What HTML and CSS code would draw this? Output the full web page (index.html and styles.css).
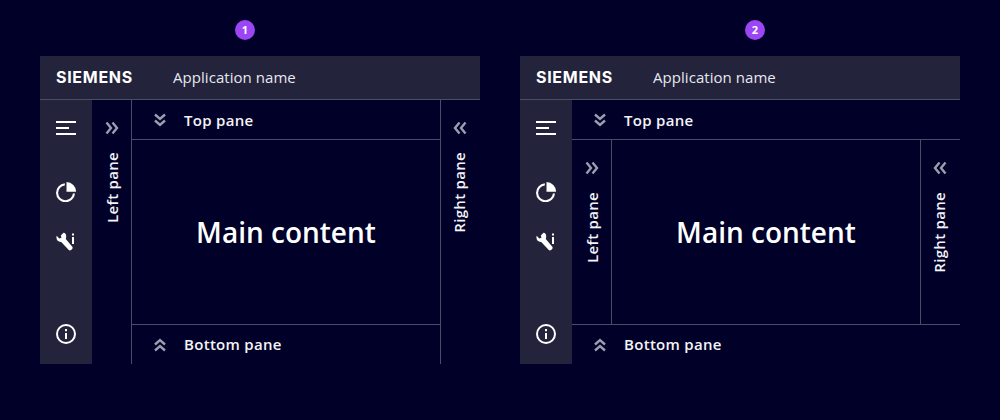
FILE: index.html
```html
<!DOCTYPE html>
<html lang="en">
<head>
    <meta charset="UTF-8">
    <title>Pane layouts</title>
    <link rel="stylesheet" href="styles.css">
</head>
<body>
    <svg class="icon-defs" width="0" height="0">
        <symbol id="chev-right" viewBox="0 0 16 16"><path d="M2.500 2.500 7 8l-4.500 5.500M8.500 2.500 13 8l-4.500 5.500"/></symbol>
        <symbol id="chev-left" viewBox="0 0 16 16"><path d="M7.500 2.500 3 8l4.500 5.500M13.500 2.500 9 8l4.500 5.500"/></symbol>
        <symbol id="chev-down" viewBox="0 0 16 16"><path d="M3 2.500 8 7l5-4.500M3 8.500 8 13l5-4.500"/></symbol>
        <symbol id="chev-up" viewBox="0 0 16 16"><path d="M3 7.500 8 3l5 4.500M3 13.500 8 9l5 4.500"/></symbol>
        <symbol id="ico-menu" viewBox="0 0 20 20"><path d="M0 3h20v2H0zM0 9h13v2H0zM0 15h20v2H0z"/></symbol>
        <symbol id="ico-pie" viewBox="0 0 20 20"><path d="M8.800 1.300A9.500 9.500 0 1 0 19 11.500h-2.100A7.400 7.400 0 1 1 8.800 3.400z"/><path d="M10.500 0A9.500 9.500 0 0 1 20 9.800h-9.500z"/></symbol>
        <symbol id="ico-tool" viewBox="0 0 20 20"><path d="M7.500.8 4.800 3.500l.7 2.200-2.200.7L.7 3.800C-.4 7.200 1.800 10.300 5.200 10l7.600 8c1.400 1.500 5-1.600 3.500-3.300L9.800 7C10.800 3.500 10 1 7.500.8z"/><path d="M16 1.500h2v2h-2zM16 5h2v7h-2z"/></symbol>
        <symbol id="ico-info" viewBox="0 0 20 20"><path d="M10 0a10 10 0 1 0 0 20 10 10 0 0 0 0-20zm0 2a8 8 0 1 1 0 16 8 8 0 0 1 0-16z" fill-rule="evenodd"/><path d="M9 5h2v2.200H9zM9 9h2v6H9z"/></symbol>
    </svg>

    <div class="columns">
        <!-- side panes run full height -->
        <div class="example">
            <div class="badge badge-first">1</div>
            <div class="frame">
                <div class="header">
                    <span class="logo">SIEMENS</span>
                    <span class="app-name">Application name</span>
                </div>
                <div class="body">
                    <div class="sidebar">
                        <svg class="side-icon"><use href="#ico-menu"/></svg>
                        <svg class="side-icon pie-icon"><use href="#ico-pie"/></svg>
                        <svg class="side-icon tool-icon"><use href="#ico-tool"/></svg>
                        <svg class="side-icon info-icon"><use href="#ico-info"/></svg>
                    </div>
                    <div class="panes panes-full-sides">
                        <div class="pane pane-top"><svg class="chev"><use href="#chev-down"/></svg><span>Top pane</span></div>
                        <div class="pane pane-left"><svg class="chev"><use href="#chev-right"/></svg><span>Left pane</span></div>
                        <div class="main">Main content</div>
                        <div class="pane pane-right"><svg class="chev"><use href="#chev-left"/></svg><span>Right pane</span></div>
                        <div class="pane pane-bottom"><svg class="chev"><use href="#chev-up"/></svg><span>Bottom pane</span></div>
                    </div>
                </div>
            </div>
        </div>

        <!-- top and bottom panes run full width -->
        <div class="example">
            <div class="badge badge-second">2</div>
            <div class="frame">
                <div class="header">
                    <span class="logo">SIEMENS</span>
                    <span class="app-name">Application name</span>
                </div>
                <div class="body">
                    <div class="sidebar">
                        <svg class="side-icon"><use href="#ico-menu"/></svg>
                        <svg class="side-icon pie-icon"><use href="#ico-pie"/></svg>
                        <svg class="side-icon tool-icon"><use href="#ico-tool"/></svg>
                        <svg class="side-icon info-icon"><use href="#ico-info"/></svg>
                    </div>
                    <div class="panes panes-full-bars">
                        <div class="pane pane-top"><svg class="chev"><use href="#chev-down"/></svg><span>Top pane</span></div>
                        <div class="pane pane-left"><svg class="chev"><use href="#chev-right"/></svg><span>Left pane</span></div>
                        <div class="main">Main content</div>
                        <div class="pane pane-right"><svg class="chev"><use href="#chev-left"/></svg><span>Right pane</span></div>
                        <div class="pane pane-bottom"><svg class="chev"><use href="#chev-up"/></svg><span>Bottom pane</span></div>
                    </div>
                </div>
            </div>
        </div>
    </div>
</body>
</html>
```

FILE: styles.css
```css
* {
    margin: 0;
    padding: 0;
    box-sizing: border-box;
}

body {
    width: 1000px;
    height: 420px;
    overflow: hidden;
    background: #000028;
    color: #fff;
    font-family: 'Open Sans', 'Noto Sans', sans-serif;
}

.icon-defs {
    position: absolute;
}

.columns {
    display: flex;
    gap: 40px;
    padding: 20px 40px 0;
}

.example {
    width: 440px;
    display: flex;
    flex-direction: column;
    align-items: center;
    gap: 16px;
}

.badge {
    width: 20px;
    height: 20px;
    border-radius: 50%;
    background: #9b45f5;
    font-size: 11px;
    font-weight: 700;
    line-height: 20px;
    text-align: center;
}

.badge-first {
    margin-right: 30px;
}

.badge-second {
    margin-left: 30px;
}

.frame {
    width: 100%;
    height: 308px;
    display: flex;
    flex-direction: column;
}

/* header */
.header {
    height: 44px;
    flex: none;
    display: flex;
    align-items: center;
    gap: 40px;
    padding: 0 16px 1px;
    background: #23233c;
    border-bottom: 1px solid #4c4c68;
}

.logo {
    width: 77px;
    font-family: 'Inter', sans-serif;
    font-size: 16px;
    font-weight: 700;
    letter-spacing: 0.7px;
    white-space: nowrap;
}

.app-name {
    font-size: 15px;
    letter-spacing: 0.05px;
    color: #e8e8ee;
}

.body {
    flex: 1;
    display: flex;
    min-height: 0;
}

/* sidebar */
.sidebar {
    width: 52px;
    flex: none;
    display: flex;
    flex-direction: column;
    align-items: center;
    padding-top: 18px;
    background: #23233c;
}

.side-icon {
    width: 20px;
    height: 20px;
    fill: #fff;
    flex: none;
}

.pie-icon {
    margin-top: 44px;
}

.tool-icon {
    margin-top: 30px;
}

.info-icon {
    margin-top: auto;
    margin-bottom: 20px;
}

/* panes */
.panes {
    flex: 1;
    display: grid;
    grid-template-columns: 40px 1fr 40px;
    grid-template-rows: 40px 1fr 40px;
}

.panes-full-sides {
    grid-template-areas:
        "left top right"
        "left main right"
        "left bottom right";
}

.panes-full-bars {
    grid-template-areas:
        "top top top"
        "left main right"
        "bottom bottom bottom";
}

.pane {
    display: flex;
    align-items: center;
    font-size: 15px;
    font-weight: 600;
    letter-spacing: 0.3px;
    color: #f4f4f6;
}

.chev {
    width: 16px;
    height: 16px;
    flex: none;
    fill: none;
    stroke: #9d9db0;
    stroke-width: 2.400;
}

.pane-top,
.pane-bottom {
    gap: 16px;
    padding-left: 20px;
}

.pane-top {
    grid-area: top;
    border-bottom: 1px solid #4c4c68;
}

.pane-bottom {
    grid-area: bottom;
    border-top: 1px solid #4c4c68;
}

.pane-bottom span {
    margin-top: -2px;
}

.pane-left,
.pane-right {
    flex-direction: column;
    gap: 16px;
    padding-top: 20px;
}

.pane-left span,
.pane-right span {
    writing-mode: vertical-rl;
    transform: rotate(180deg);
}

.pane-left {
    grid-area: left;
    border-right: 1px solid #4c4c68;
}

.pane-right {
    grid-area: right;
    padding-right: 2px;
    border-left: 1px solid #4c4c68;
}

.pane-right span {
    margin-right: 2px;
}

.main {
    grid-area: main;
    display: flex;
    align-items: center;
    justify-content: center;
    font-size: 28px;
    font-weight: 600;
}
```
